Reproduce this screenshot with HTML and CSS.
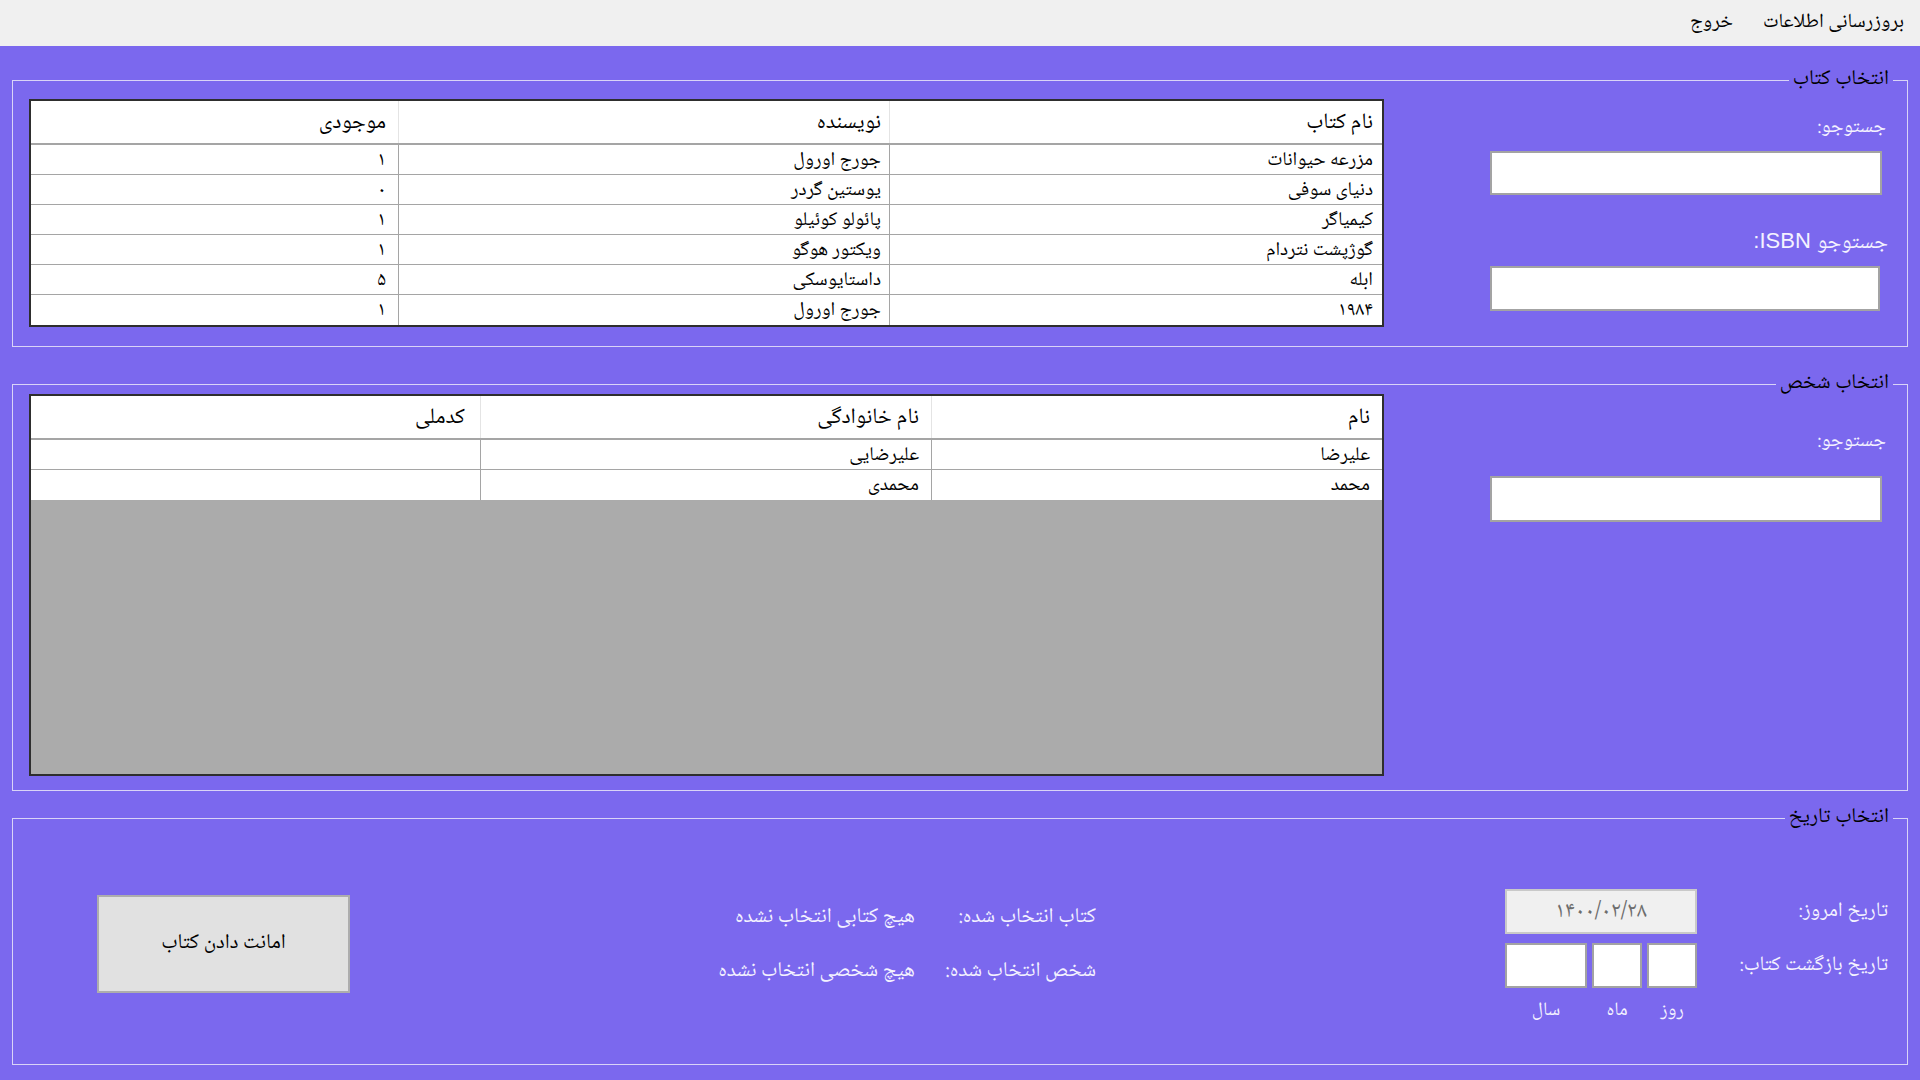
FILE: index.html
```html
<!DOCTYPE html>
<html lang="fa" dir="rtl">
<head>
<meta charset="utf-8">
<title>امانت کتاب</title>
<link rel="stylesheet" href="styles.css">
</head>
<body>
<nav class="menubar">
  <span class="menu-item">بروزرسانی اطلاعات</span>
  <span class="menu-item">خروج</span>
</nav>
<main class="main">
  <section class="group group-book">
    <div class="group-title">انتخاب کتاب</div>
    <div class="search-panel">
      <label class="field-label">جستوجو:</label>
      <div class="text-input"></div>
      <label class="field-label isbn-label">جستوجو ISBN:</label>
      <div class="text-input narrow"></div>
    </div>
    <div class="grid grid-books">
      <div class="grid-row grid-head">
        <div class="cell c-b1">نام کتاب</div>
        <div class="cell c-b2">نویسنده</div>
        <div class="cell c-b3">موجودی</div>
      </div>
      <div class="grid-row"><div class="cell c-b1">مزرعه حیوانات</div><div class="cell c-b2">جورج اورول</div><div class="cell c-b3">۱</div></div>
      <div class="grid-row"><div class="cell c-b1">دنیای سوفی</div><div class="cell c-b2">یوستین گردر</div><div class="cell c-b3">۰</div></div>
      <div class="grid-row"><div class="cell c-b1">کیمیاگر</div><div class="cell c-b2">پائولو کوئیلو</div><div class="cell c-b3">۱</div></div>
      <div class="grid-row"><div class="cell c-b1">گوژپشت نتردام</div><div class="cell c-b2">ویکتور هوگو</div><div class="cell c-b3">۱</div></div>
      <div class="grid-row"><div class="cell c-b1">ابله</div><div class="cell c-b2">داستایوسکی</div><div class="cell c-b3">۵</div></div>
      <div class="grid-row"><div class="cell c-b1">۱۹۸۴</div><div class="cell c-b2">جورج اورول</div><div class="cell c-b3">۱</div></div>
    </div>
  </section>

  <section class="group group-person">
    <div class="group-title">انتخاب شخص</div>
    <div class="search-panel person-search">
      <label class="field-label">جستوجو:</label>
      <div class="text-input"></div>
    </div>
    <div class="grid grid-people">
      <div class="grid-row grid-head">
        <div class="cell c-p">نام</div>
        <div class="cell c-p">نام خانوادگی</div>
        <div class="cell c-p">کدملی</div>
      </div>
      <div class="grid-row"><div class="cell c-p">علیرضا</div><div class="cell c-p">علیرضایی</div><div class="cell c-p"></div></div>
      <div class="grid-row"><div class="cell c-p">محمد</div><div class="cell c-p">محمدی</div><div class="cell c-p"></div></div>
      <div class="grid-empty"></div>
    </div>
  </section>

  <section class="group group-date">
    <div class="group-title">انتخاب تاریخ</div>
    <div class="date-block">
      <div class="date-label">تاریخ امروز:</div>
      <div class="today-box">۱۴۰۰/۰۲/۲۸</div>
      <div class="date-label">تاریخ بازگشت کتاب:</div>
      <div class="date-inputs">
        <div class="text-input d-day"></div>
        <div class="text-input d-month"></div>
        <div class="text-input d-year"></div>
      </div>
      <div></div>
      <div class="date-inputs date-captions">
        <span class="d-day">روز</span>
        <span class="d-month">ماه</span>
        <span class="d-year">سال</span>
      </div>
    </div>
    <div class="selection-info">
      <div class="info-label">کتاب انتخاب شده:</div>
      <div class="info-value">هیچ کتابی انتخاب نشده</div>
      <div class="info-label">شخص انتخاب شده:</div>
      <div class="info-value">هیچ شخصی انتخاب نشده</div>
    </div>
    <button class="lend-button" type="button">امانت دادن کتاب</button>
  </section>
</main>
</body>
</html>
```
FILE: styles.css
```css
* { box-sizing: border-box; }
html, body { margin: 0; padding: 0; }
body {
  width: 1920px;
  height: 1080px;
  overflow: hidden;
  font-family: "Noto Naskh Arabic", "Noto Sans Arabic", "DejaVu Sans", sans-serif;
  font-size: 20px;
  color: #000;
  background: #7b68ee;
}

.menubar {
  height: 46px;
  background: #f0f0f0;
  display: flex;
  align-items: center;
  gap: 30px;
  padding: 0 16px 0 0;
  font-size: 20px;
  line-height: 28px;
}

.main {
  height: 1034px;
  background: #7b68ee;
  padding: 34px 12px 0 12px;
  display: flex;
  flex-direction: column;
}

.group {
  position: relative;
  border: 1px solid #d9d4f7;
  display: flex;
}
.group-title {
  position: absolute;
  top: -15px;
  right: 14px;
  padding: 0 4px;
  background: #7b68ee;
  font-size: 21px;
  line-height: 28px;
  color: #000;
}

.group-book { height: 267px; }
.group-person { height: 407px; margin-top: 37px; }
.group-date { height: 247px; margin-top: 27px; }

/* search panel */
.search-panel {
  width: 392px;
  margin-right: 25px;
  display: flex;
  flex-direction: column;
}
.field-label {
  color: #f4f2ff;
  font-size: 20px;
  line-height: 28px;
  margin-right: -4px;
}
.group-book .field-label:first-child { margin-top: 33px; }
.text-input {
  background: #fff;
  border: 2px solid #a3a3a3;
}
.search-panel .text-input { height: 44px; margin-top: 9px; }
.search-panel .text-input.narrow { width: 390px; align-self: flex-end; margin-top: 11px; height: 45px; }
.isbn-label {
  font-family: "Liberation Sans", "Noto Naskh Arabic", "DejaVu Sans", sans-serif;
  font-size: 22px;
  line-height: 28px;
  margin-top: 32px;
  margin-right: -6px;
}
.person-search .field-label { margin-top: 43px; }
.person-search .text-input { margin-top: 20px; height: 46px; }

/* data grids */
.grid {
  width: 1355px;
  margin-right: auto;
  margin-left: 16px;
  border: 2px solid #2e2e2e;
  background: #fff;
  display: flex;
  flex-direction: column;
}
.grid-books { margin-top: 18px; height: 228px; }
.grid-people { margin-top: 9px; height: 382px; background: #ababab; }
.grid-row {
  display: flex;
  height: 30px;
  background: #fff;
  border-bottom: 1px solid #a5a5a5;
  line-height: 22px;
  font-size: 19.5px;
}
.grid-row:last-child { border-bottom: none; }
.grid-head { height: 44px; border-bottom: 2px solid #a5a5a5; font-size: 22px; line-height: 28px; }
.cell {
  padding: 2px 9px 0 9px;
  display: flex;
  align-items: center;
  border-left: 1px solid #a5a5a5;
  white-space: nowrap;
}
.grid-head .cell { border-left-color: #e4e4e4; padding-top: 2px; }
.cell:last-child { border-left: none; }
.c-b1 { width: 493px; }
.c-b2 { width: 491px; padding-right: 8px; }
.c-b3 { flex: 1; padding-right: 12px; }
.c-p { width: 451px; padding-right: 12px; }
.c-p:last-child { flex: 1; padding-right: 15px; }
.grid-people .grid-row:nth-child(3) { border-bottom: none; }
.grid-empty { flex: 1; background: #ababab; }

/* date group */
.date-block {
  margin-top: 70px;
  margin-right: 19px;
  display: grid;
  grid-template-columns: 191px 192px;
  grid-template-rows: 45px 45px 24px;
  row-gap: 9px;
  align-self: flex-start;
}
.date-label {
  color: #f4f2ff;
  font-size: 20.5px;
  line-height: 28px;
  display: flex;
  align-items: center;
}
.today-box {
  background: #f0f0f0;
  border: 2px solid #c9c9c9;
  color: #6d6d6d;
  font-size: 22px;
  line-height: 28px;
  display: flex;
  align-items: center;
  justify-content: center;
}
.date-inputs {
  display: flex;
  gap: 5px;
}
.date-inputs .d-day { width: 50px; }
.date-inputs .d-month { width: 50px; }
.date-inputs .d-year { width: 82px; }
.date-captions span {
  color: #f4f2ff;
  font-size: 19px;
  text-align: center;
  line-height: 24px;
  margin-top: 2px;
}

.selection-info {
  margin-right: 409px;
  margin-top: 86px;
  display: grid;
  grid-template-columns: 181px auto;
  row-gap: 28px;
  align-self: flex-start;
  color: #f4f2ff;
  font-size: 21px;
  line-height: 26px;
}

.lend-button {
  margin-right: auto;
  margin-left: 84px;
  margin-top: 76px;
  align-self: flex-start;
  width: 253px;
  height: 98px;
  background: #e1e1e1;
  border: 2px solid #adadad;
  font-family: inherit;
  font-size: 21px;
  line-height: 28px;
  color: #000;
  padding: 0;
}
```
